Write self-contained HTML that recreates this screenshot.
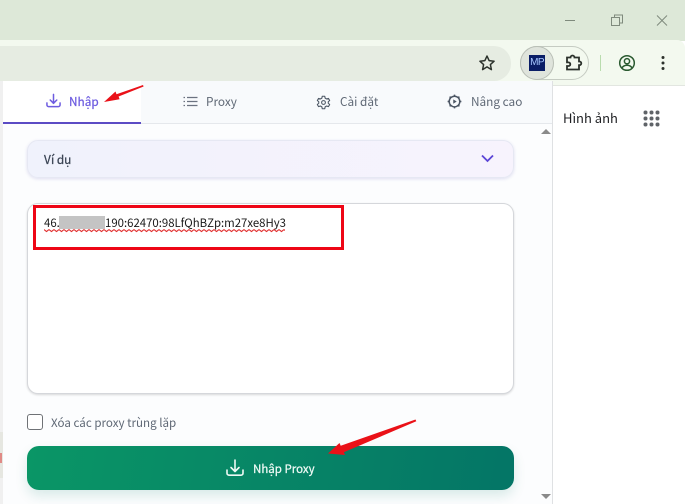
<!DOCTYPE html>
<html><head><meta charset="utf-8"><style>
html,body{margin:0;padding:0}
body{width:685px;height:504px;position:relative;overflow:hidden;background:#fff;font-family:"Noto Sans CJK SC","Liberation Sans",sans-serif}
.a{position:absolute}
.t{position:absolute;white-space:nowrap;line-height:16px}
svg{position:absolute;overflow:visible}
</style></head><body>
<div class="a" style="left:0;top:0;width:685px;height:41px;background:#dde8d8"></div>
<div class="a" style="left:0;top:40px;width:685px;height:46px;background:#f3f9ef;border-top-right-radius:8px;border-bottom:1px solid #e2e6e0;box-sizing:border-box"></div>
<div class="a" style="left:0;top:46px;width:511px;height:35px;background:#e6ece2;border-radius:0 17px 17px 0"></div>
<!-- window controls -->
<svg style="left:0;top:0" width="685" height="40" fill="none" stroke="#7f8a7d" stroke-width="1">
<path d="M565 20.500H575"/>
<path d="M611.500 17.500h8v8h-8zM614.500 17.500v-2.500h8v8h-3"/>
<path d="M657 15.500l10 10M667 15.500l-10 10"/>
</svg>
<!-- star -->
<svg style="left:479px;top:55px" width="16" height="16" viewBox="0 0 16 16" fill="none" stroke="#2c322c" stroke-width="1.500" stroke-linejoin="round"><path d="M8 1l2.100 4.600 5 .6-3.700 3.400 1 5L8 11.900l-4.400 2.700 1-5L.9 6.200l5-.6z"/></svg>
<!-- extension pill -->
<div class="a" style="left:520px;top:46px;width:69px;height:34px;box-sizing:border-box;border:1px solid #c5cbc2;border-radius:17px"></div>
<div class="a" style="left:520px;top:46px;width:34px;height:34px;box-sizing:border-box;background:#dfe4dc;border:1px solid #b9bfb6;border-radius:17px"></div>
<div class="a" style="left:529px;top:55px;width:16px;height:16px;background:#0a1d66"></div>
<div class="t" style="left:529px;top:55px;width:16px;text-align:center;font-size:10px;color:#a6c6ff;letter-spacing:-.6px;font-family:'Liberation Sans',sans-serif">MP</div>
<svg style="left:566px;top:55px" width="16" height="16" viewBox="0 0 16 16" fill="none" stroke="#2c322c" stroke-width="1.800" stroke-linejoin="miter"><path d="M1 2.500h3.500a2 2 0 0 1 4 0H13v4h.5a1.800 1.800 0 0 1 0 3.600H13v4.400H1v-3.500h1.500a1.800 1.800 0 0 0 0-3.600H1z"/></svg>
<div class="a" style="left:600px;top:55px;width:1px;height:16px;background:#b9dcae"></div>
<svg style="left:618px;top:54px" width="18" height="18" viewBox="0 0 18 18" fill="none" stroke="#2a5a30" stroke-width="1.500"><circle cx="9" cy="9" r="7.300"/><circle cx="9" cy="7.200" r="2.600"/><path d="M3.900 14c1.200-2 3-2.700 5.100-2.700s3.900.7 5.100 2.700"/></svg>
<svg style="left:660px;top:55px" width="6" height="16" fill="#2c322c"><circle cx="3" cy="2.500" r="1.500"/><circle cx="3" cy="8" r="1.500"/><circle cx="3" cy="13.500" r="1.500"/></svg>
<!-- page right -->
<div class="t" style="left:563px;top:110px;font-size:13px;color:#202124">Hình ảnh</div>
<svg style="left:643px;top:110px" width="17" height="17" fill="#5f6368"><circle cx="2.500" cy="2.500" r="2"/><circle cx="8.500" cy="2.500" r="2"/><circle cx="14.500" cy="2.500" r="2"/><circle cx="2.500" cy="8.500" r="2"/><circle cx="8.500" cy="8.500" r="2"/><circle cx="14.500" cy="8.500" r="2"/><circle cx="2.500" cy="14.500" r="2"/><circle cx="8.500" cy="14.500" r="2"/><circle cx="14.500" cy="14.500" r="2"/></svg>
<!-- left edge page peek -->
<div class="a" style="left:0;top:81px;width:3px;height:423px;background:#f0f0f0"></div>
<div class="a" style="left:0;top:432px;width:3px;height:46px;background:#e6e7e1"></div>
<div class="a" style="left:0;top:453px;width:2px;height:10px;background:#e08a86"></div>
<!-- popup -->
<div class="a" style="left:3px;top:81px;width:550px;height:423px;background:#fcfdfe;border-right:1px solid #dfe1e3;box-sizing:border-box"></div>
<div class="a" style="left:3px;top:81px;width:549px;height:43px;background:#f8fafc;border-bottom:1px solid #e5e8ec;box-sizing:border-box"></div>
<div class="a" style="left:3px;top:81px;width:138px;height:43px;background:#fff;border-bottom:2px solid #5b4bc4;box-sizing:border-box"></div>
<!-- tabs -->
<svg style="left:46px;top:93px" width="15" height="15" viewBox="0 0 16 16" fill="none" stroke="#6d5ce0" stroke-width="1.600" stroke-linecap="round" stroke-linejoin="round"><path d="M1 10.500v2.300a1.700 1.700 0 0 0 1.700 1.700h10.600a1.700 1.700 0 0 0 1.700-1.700v-2.300M8 1.500v9M4.500 7.500L8 11l3.500-3.500"/></svg>
<div class="t" style="left:69px;top:94px;font-size:11.800px;-webkit-text-stroke:.25px #6d5ce0;color:#6d5ce0">Nhập</div>
<svg style="left:183px;top:96px" width="15" height="12" fill="none" stroke="#6b7280" stroke-width="1.300"><path d="M4 1.500h10.500M4 5.500h10.500M4 9.500h10.500M.5 1.500h1.500M.5 5.500h1.500M.5 9.500h1.500"/></svg>
<div class="t" style="left:206px;top:94px;font-size:11.800px;color:#5f6875">Proxy</div>
<svg style="left:316px;top:95px" width="15" height="15" viewBox="0 0 24 24" fill="none" stroke="#4b5563" stroke-width="1.700" stroke-linejoin="round"><path d="M10 2h4l.6 3 2.400 1.400 2.900-1 2 3.400-2.300 2v2.400l2.300 2-2 3.400-2.900-1L14.600 19 14 22h-4l-.6-3L7 17.600l-2.900 1-2-3.400 2.300-2v-2.400l-2.300-2 2-3.400 2.900 1L9.400 5z"/><circle cx="12" cy="12" r="3"/></svg>
<div class="t" style="left:340px;top:94px;font-size:11.800px;color:#5f6875">Cài đặt</div>
<svg style="left:447px;top:94px" width="15" height="15" viewBox="0 0 24 24" fill="none" stroke="#4b5563" stroke-width="2.400"><circle cx="12" cy="12" r="8.500"/><path d="M12 1v3M12 20v3M1 12h3M20 12h3M4.200 4.200l2.100 2.100M17.700 17.700l2.100 2.100M4.200 19.800l2.100-2.100M17.700 6.300l2.100-2.100"/><path d="M10 8.500l5.500 3.500-5.500 3.500z" fill="#4b5563" stroke="none"/></svg>
<div class="t" style="left:471px;top:94px;font-size:11.800px;color:#5f6875">Nâng cao</div>
<!-- scrollbar arrows -->
<div class="a" style="left:541px;top:129px;width:0;height:0;border-left:5px solid transparent;border-right:5px solid transparent;border-bottom:5px solid #8a8a8a"></div>
<div class="a" style="left:541px;top:494px;width:0;height:0;border-left:5px solid transparent;border-right:5px solid transparent;border-top:5px solid #8a8a8a"></div>
<!-- select -->
<div class="a" style="left:27px;top:140px;width:487px;height:38px;box-sizing:border-box;border:1px solid #e6e8f3;border-radius:11px;background:linear-gradient(90deg,#f0f2fc,#f7f3fd);box-shadow:0 1px 3px rgba(90,80,180,.18)"></div>
<div class="t" style="left:44px;top:152px;font-size:11.800px;-webkit-text-stroke:.25px #3a4454;color:#3a4454">Ví dụ</div>
<svg style="left:481px;top:154px" width="13" height="9" fill="none" stroke="#5b45d6" stroke-width="1.800"><path d="M1 1.500L6.500 7 12 1.500"/></svg>
<!-- textarea -->
<div class="a" style="left:27px;top:203px;width:487px;height:191px;box-sizing:border-box;border:1px solid #d5d7db;border-radius:11px;background:#fff;box-shadow:0 1px 2px rgba(0,0,0,.15)"></div>
<div class="t" style="left:44px;top:215px;font-size:11.400px;color:#1a1a1a">46.</div>
<div class="a" style="left:59px;top:216px;width:46px;height:13px;background:#c4c4c4"></div>
<div class="t" style="left:105px;top:215px;font-size:11.400px;color:#1a1a1a">190:62470:98LfQhBZp:m27xe8Hy3</div>
<svg style="left:44px;top:228px" width="241" height="5"><defs><pattern id="w" width="5" height="5" patternUnits="userSpaceOnUse"><path d="M0 1.500L2.500 3.500L5 1.500" fill="none" stroke="#e02a2a" stroke-width="1.100"/></pattern></defs><rect width="241" height="5" fill="url(#w)"/></svg>
<div class="a" style="left:33px;top:205px;width:311px;height:45px;box-sizing:border-box;border:3px solid #ee0616"></div>
<!-- checkbox -->
<div class="a" style="left:27px;top:414px;width:16px;height:16px;box-sizing:border-box;border:1px solid #6f7276;border-radius:3px;background:#fff"></div>
<div class="t" style="left:51px;top:415px;font-size:11.600px;color:#5f6875">Xóa các proxy trùng lặp</div>
<!-- button -->
<div class="a" style="left:27px;top:446px;width:487px;height:44px;border-radius:12px;background:linear-gradient(100deg,#0a9666,#047566);box-shadow:0 6px 12px rgba(5,120,100,.14)"></div>
<svg style="left:226px;top:459px" width="18" height="18" viewBox="0 0 18 18" fill="none" stroke="#eefaf5" stroke-width="1.600" stroke-linecap="round" stroke-linejoin="round"><path d="M1 11v3.200A2 2 0 0 0 3 16.200h12a2 2 0 0 0 2-2V11M9 1v11M5 8.500L9 12.500l4-4"/></svg>
<div class="t" style="left:253px;top:461px;font-size:11.500px;-webkit-text-stroke:.25px #eefaf5;color:#eefaf5">Nhập Proxy</div>
<!-- red arrows -->
<svg style="left:0;top:0" width="685" height="504" fill="#ea1118" stroke="none">
<path d="M143 85l.6 1.500-25 10 1 2.800L104 102l11.500-10.500 1 2.800z"/>
<path d="M415.500 419.500l.8 1.800-72.500 31 1.200 2.700L328 453.500l11.500-10.500 1.200 2.700z"/>
</svg>
</body></html>
